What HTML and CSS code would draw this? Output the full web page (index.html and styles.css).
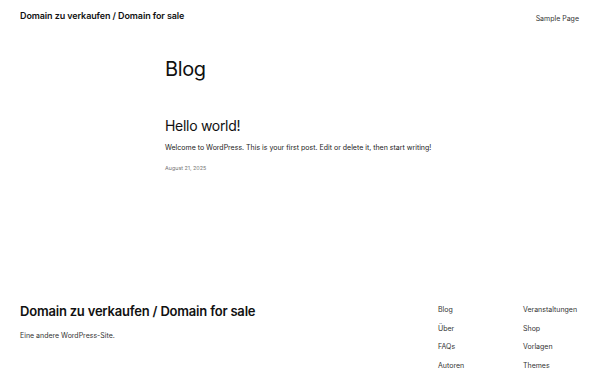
FILE: index.html
```html
<!DOCTYPE html>
<html lang="de">
<head>
  <meta charset="UTF-8" />
  <title>Blog – Domain zu verkaufen / Domain for sale</title>
  <link rel="stylesheet" href="styles.css">
</head>
<body>

<header class="site-header">
  <a class="site-title" href="#">Domain zu verkaufen / Domain for sale</a>
  <nav class="top-nav">
    <a href="#">Sample Page</a>
  </nav>
</header>

<main class="content">
  <h1 class="page-title">Blog</h1>

  <article class="post">
    <h2 class="post-title"><a href="#">Hello world!</a></h2>
    <p class="post-excerpt">Welcome to WordPress. This is your first post. Edit or delete it, then start writing!</p>
    <div class="post-date">August 21, 2025</div>
  </article>
</main>

<footer class="site-footer">
  <div class="footer-brand">
    <a class="footer-title" href="#">Domain zu verkaufen / Domain for sale</a>
    <p class="tagline">Eine andere WordPress-Site.</p>
  </div>
  <nav class="footer-nav">
    <ul>
      <li><a href="#">Blog</a></li>
      <li><a href="#">Über</a></li>
      <li><a href="#">FAQs</a></li>
      <li><a href="#">Autoren</a></li>
    </ul>
    <ul>
      <li><a href="#">Veranstaltungen</a></li>
      <li><a href="#">Shop</a></li>
      <li><a href="#">Vorlagen</a></li>
      <li><a href="#">Themes</a></li>
    </ul>
  </nav>
</footer>

</body>
</html>
```

FILE: styles.css
```css
body {
  margin: 0;
  font-family: 'Inter', 'Noto Sans', sans-serif;
  color: #111;
  background: #fff;
  width: 600px;
  height: 375px;
  overflow: hidden;
}
a {
  color: inherit;
  text-decoration: none;
}

/* header */
.site-header {
  display: flex;
  justify-content: space-between;
  align-items: center;
  padding: 0 21px 0 20px;
  height: 30px;
}
.site-title {
  font-size: 9px;
  font-weight: 600;
  letter-spacing: -0.1px;
}
.top-nav a {
  font-size: 7px;
  color: #333;
}

/* main */
.content {
  padding-top: 27px;
  padding-left: 165px;
  height: 249px;
}
.page-title {
  margin: 0;
  font-size: 20px;
  font-weight: 400;
  letter-spacing: -0.4px;
  line-height: 1.2;
}
.post {
  margin-top: 37px;
}
.post-title {
  margin: 0;
  font-size: 14px;
  font-weight: 400;
  letter-spacing: -0.3px;
  line-height: 1.2;
}
.post-excerpt {
  margin: 8px 0 0;
  font-size: 7px;
  color: #222;
}
.post-date {
  margin-top: 13px;
  font-size: 5.4px;
  color: #777;
}

/* footer */
.site-footer {
  display: flex;
  justify-content: space-between;
  padding: 0 20px;
}
.footer-title {
  font-size: 13px;
  font-weight: 600;
  letter-spacing: -0.2px;
  line-height: 1.2;
  display: block;
  margin-top: -2px;
}
.tagline {
  margin: 11px 0 0;
  font-size: 7px;
  color: #333;
}
.footer-nav {
  display: flex;
}
.footer-nav ul {
  list-style: none;
  margin: 0;
  padding: 0;
  display: flex;
  flex-direction: column;
  gap: 10px;
}
.footer-nav ul:first-child {
  width: 85px;
}
.footer-nav ul:last-child {
  width: 57px;
}
.footer-nav li {
  font-size: 7px;
  line-height: 8.5px;
  color: #333;
}
```
